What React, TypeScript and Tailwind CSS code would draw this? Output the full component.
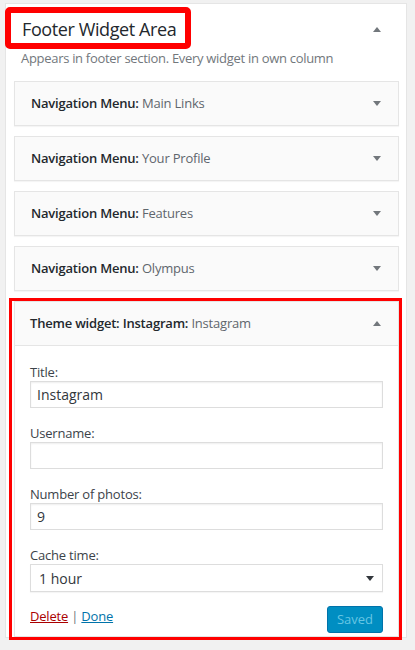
import React from "react";

const font = { fontFamily: '"Open Sans", "Liberation Sans", sans-serif' };

const Caret = ({ up, color = "#72777c" }: { up?: boolean; color?: string }) => (
  <svg width="8" height="5" viewBox="0 0 8 5" className="shrink-0">
    <polygon points={up ? "0,5 8,5 4,0" : "0,0 8,0 4,5"} fill={color} />
  </svg>
);

const WidgetRow = ({ name, title }: { name: string; title: string }) => (
  <div className="flex h-[45px] items-center justify-between border border-[#e5e5e5] bg-[#fafafa] pl-[16px] pr-[17px] shadow-[0_1px_1px_rgba(0,0,0,0.04)]">
    <div className="text-[13px] tracking-[-0.2px]">
      <span className="font-semibold text-[#23282d]">{name}</span>
      <span className="text-[#5f666d]"> {title}</span>
    </div>
    <Caret />
  </div>
);

const Field = ({ label, value }: { label: string; value: string }) => (
  <div>
    <div className="text-[13px] leading-[17px] tracking-[-0.2px] text-[#3c434a]">{label}</div>
    <div className="flex h-[27px] items-center border border-[#ddd] bg-white pl-[6px] text-[14px] text-[#32373c] shadow-[inset_0_1px_2px_rgba(0,0,0,0.07)]">
      {value}
    </div>
  </div>
);

export default function App() {
  const widgets = [
    ["Navigation Menu:", "Main Links"],
    ["Navigation Menu:", "Your Profile"],
    ["Navigation Menu:", "Features"],
    ["Navigation Menu:", "Olympus"],
  ];

  return (
    <div className="h-[650px] w-[415px] bg-[#f1f1f1] pt-[3px]" style={font}>
      <div className="relative ml-[5px] w-[402px] border border-[#e5e5e5] bg-white">
        <div className="flex items-center justify-between pl-[16px] pr-[25px] pt-[13px]">
          <h2 className="text-[18px] leading-[24px] tracking-[-0.4px] text-[#23282d]">Footer Widget Area</h2>
          <Caret up />
        </div>
        <div className="absolute left-[-1px] top-[3px] h-[42px] w-[186px] rounded-[5px] border-[6px] border-[#ff0000]" />
        <p className="pl-[15px] pt-[9px] text-[13px] leading-[17px] tracking-[-0.3px] text-[#72777c]">
          Appears in footer section. Every widget in own column
        </p>

        <div className="ml-[8px] mr-[7px] mt-[14px] flex flex-col gap-[10px]">
          {widgets.map(([n, t]) => (
            <WidgetRow key={t} name={n} title={t} />
          ))}

          <div className="relative border border-[#e5e5e5] bg-white shadow-[0_1px_1px_rgba(0,0,0,0.04)]">
            <div className="flex h-[44px] items-center justify-between border-b border-[#e5e5e5] bg-[#fafafa] pl-[15px] pr-[17px]">
              <div className="text-[13px] tracking-[-0.2px]">
                <span className="font-semibold text-[#23282d]">Theme widget: Instagram:</span>
                <span className="text-[#5f666d]"> Instagram</span>
              </div>
              <Caret up />
            </div>
            <div className="flex flex-col gap-[17px] px-[15px] pt-[18px]">
              <Field label="Title:" value="Instagram" />
              <Field label="Username:" value="" />
              <Field label="Number of photos:" value="9" />
              <div>
                <div className="text-[13px] leading-[17px] tracking-[-0.2px] text-[#3c434a]">Cache time:</div>
                <div className="flex h-[28px] items-center justify-between border border-[#ddd] bg-white pl-[8px] pr-[8px] text-[14px] text-[#32373c] shadow-[0_1px_1px_rgba(0,0,0,0.04)]">
                  <span>1 hour</span>
                  <Caret color="#32373c" />
                </div>
              </div>
            </div>
            <div className="flex items-start justify-between px-[15px] pb-[3px] pt-[14px]">
              <div className="pt-[1px] text-[13px] leading-[18px] tracking-[-0.2px]">
                <a className="text-[#a00] underline">Delete</a>
                <span className="text-[#72777c]"> | </span>
                <a className="text-[#0073aa] underline">Done</a>
              </div>
              <button
                type="button"
                className="h-[27px] w-[56px] rounded-[3px] border border-[#0073aa] bg-[#008ec2] text-[13px] text-[#66c6e4]"
              >
                Saved
              </button>
            </div>
            <div className="absolute bottom-[-4px] left-[-6px] right-[-4px] top-[-4px] border-[3px] border-[#ff0000]" />
          </div>
        </div>
      </div>
    </div>
  );
}
